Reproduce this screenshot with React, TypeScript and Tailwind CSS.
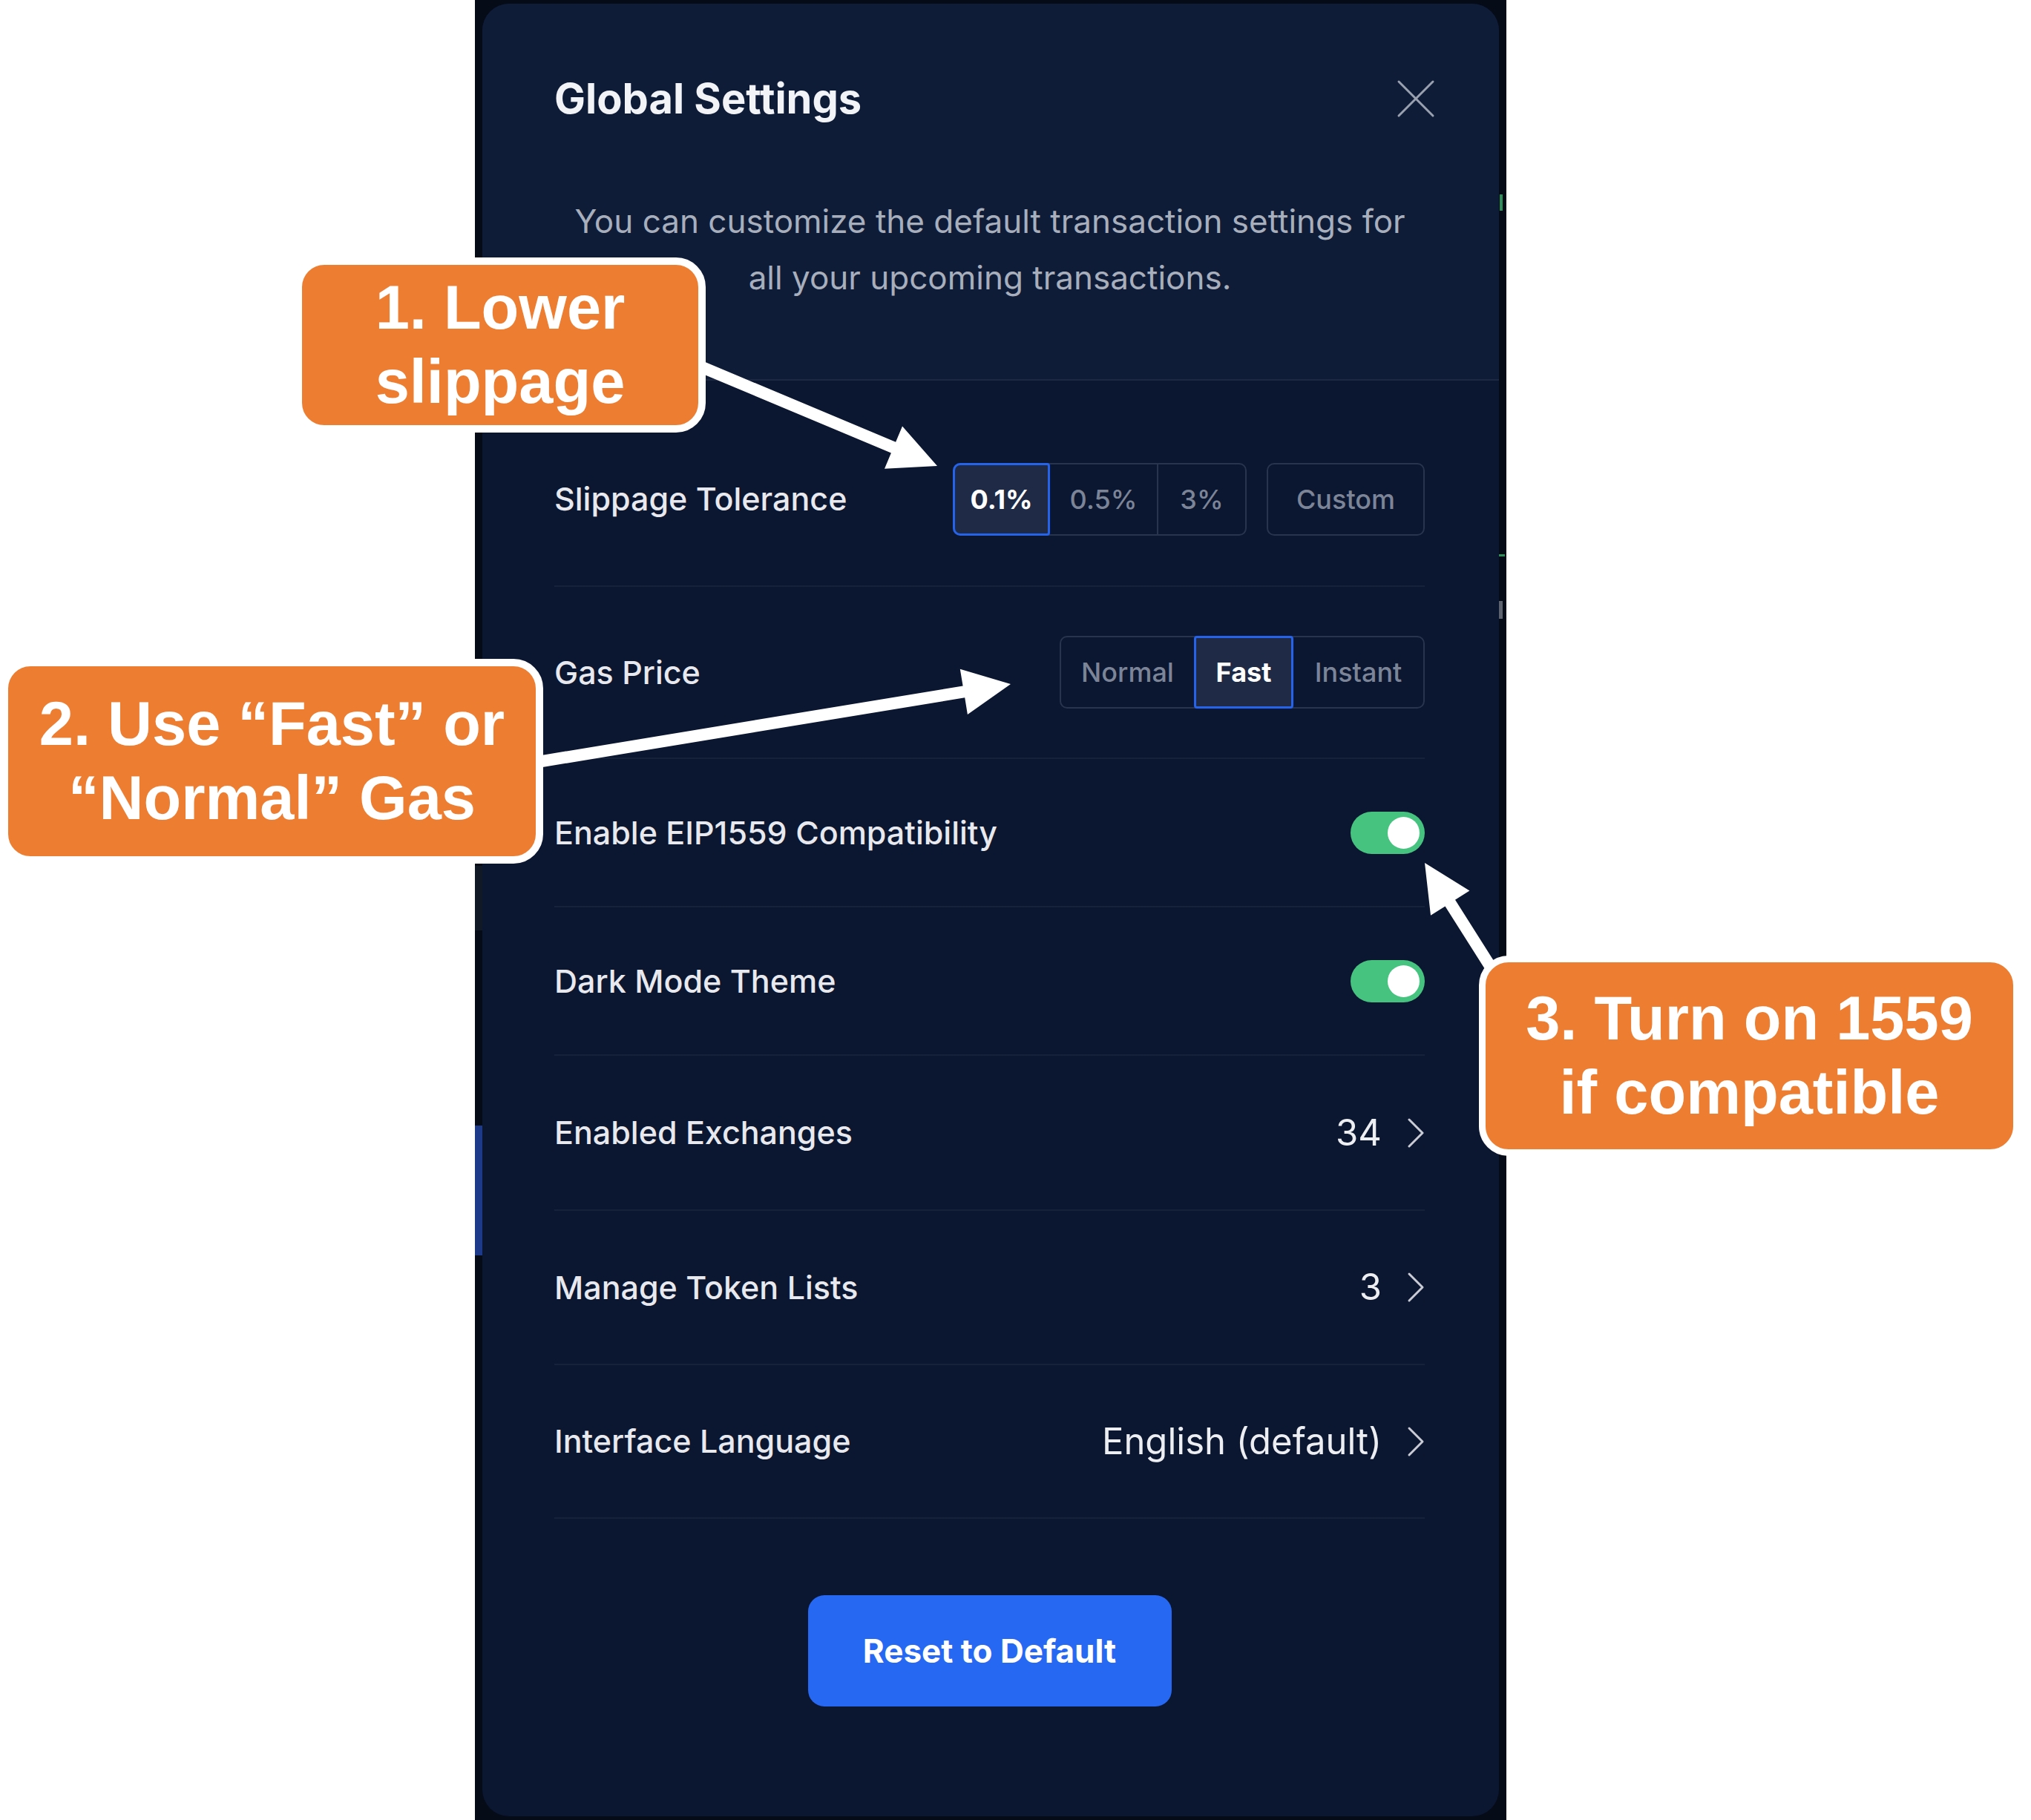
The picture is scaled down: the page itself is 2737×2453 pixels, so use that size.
import clsx from "clsx";

type Pt = [number, number];

// white annotation arrow as one polygon: shaft + triangular head
function arrowPoints(tail: Pt, tip: Pt, shaft = 16, headLen = 64, headHalf = 31) {
  const dx = tip[0] - tail[0];
  const dy = tip[1] - tail[1];
  const len = Math.hypot(dx, dy);
  const ux = dx / len;
  const uy = dy / len;
  const px = -uy;
  const py = ux;
  const bx = tip[0] - ux * headLen;
  const by = tip[1] - uy * headLen;
  const s = shaft / 2;
  const pts: Pt[] = [
    [tail[0] + px * s, tail[1] + py * s],
    [bx + px * s, by + py * s],
    [bx + px * headHalf, by + py * headHalf],
    tip,
    [bx - px * headHalf, by - py * headHalf],
    [bx - px * s, by - py * s],
    [tail[0] - px * s, tail[1] - py * s],
  ];
  return pts.map((p) => `${p[0].toFixed(1)},${p[1].toFixed(1)}`).join(" ");
}

type Seg = { label: string; w: string };

function Segmented({ options, selected }: { options: Seg[]; selected: number }) {
  return (
    <div className="flex h-[98px] rounded-[10px] border-2 border-[#28344e]">
      {options.map((o, i) => {
        const on = i === selected;
        return (
          <div
            key={o.label}
            className={clsx(
              "flex items-center justify-center text-[36px]",
              o.w,
              on
                ? "relative z-10 -my-[2px] h-[98px] border-[3px] border-[#2563eb] bg-[#1e2a46] font-bold text-white"
                : "font-medium text-[#7c8598]",
              on && i === 0 ? "-ml-[2px] rounded-l-[10px] rounded-r-[4px]" : on && "rounded-[4px]",
              !on && i > 0 && i - 1 !== selected && "border-l-2 border-[#28344e]"
            )}
          >
            {o.label}
          </div>
        );
      })}
    </div>
  );
}

function Toggle() {
  return (
    <div className="flex h-[57px] w-[100px] items-center justify-end rounded-full bg-[#46c37f] pr-[7px]">
      <div className="h-[43px] w-[43px] rounded-full bg-white" />
    </div>
  );
}

function Chevron() {
  return (
    <svg width="24" height="42" viewBox="0 0 24 42" fill="none">
      <polyline points="3,3 21,21 3,39" stroke="#c9ccd4" strokeWidth="3" strokeLinecap="round" strokeLinejoin="round" />
    </svg>
  );
}

function Row({ h, label, children }: { h: string; label: string; children: React.ReactNode }) {
  return (
    <div className={clsx("flex items-center justify-between border-b-2 border-[#16213a]", h)}>
      <span className="text-[43px] font-medium text-[#e7e9ee]">{label}</span>
      {children}
    </div>
  );
}

function LinkValue({ value }: { value: string }) {
  return (
    <div className="flex items-center gap-[34px]">
      <span className="text-[49px] text-[#eceef2]">{value}</span>
      <Chevron />
    </div>
  );
}

function Callout({ className, lines }: { className: string; lines: string[] }) {
  return (
    <div
      className={clsx(
        "absolute flex flex-col items-center justify-center rounded-[40px] border-white bg-[#ed7d31] font-['Liberation_Sans',Arial,sans-serif] text-[83px] font-bold leading-[100px] text-white",
        className
      )}
    >
      {lines.map((l) => (
        <div key={l} className="whitespace-nowrap">
          {l}
        </div>
      ))}
    </div>
  );
}

export default function App() {
  return (
    <div className="relative h-[2453px] w-[2737px] overflow-hidden bg-white font-['Inter',sans-serif]">
      <div className="ml-[640px] flex h-full w-[1390px] bg-[#050b17]">
        {/* bits of the page under the modal, left edge */}
        <div className="flex w-[10px] flex-col">
          <div className="h-[1167px]" />
          <div className="h-[87px] bg-[#111826]" />
          <div className="h-[263px]" />
          <div className="h-[175px] bg-[#1d3a8a]" />
        </div>

        <div className="mt-[5px] h-[2443px] w-[1370px] overflow-hidden rounded-[36px] bg-[#0b1630]">
          <div className="h-[508px] border-b-2 border-[#1d2943] bg-[#0f1c38] pl-[97px] pr-[86px] pt-[96px]">
            <div className="flex h-[64px] items-center justify-between">
              <h2 className="text-[56px] font-bold leading-[64px] text-[#f1f3f7]">Global Settings</h2>
              <svg width="52" height="52" viewBox="0 0 52 52" fill="none">
                <path d="M3 3L49 49M49 3L3 49" stroke="#9aa1ae" strokeWidth="3" strokeLinecap="round" />
              </svg>
            </div>
            <p className="mt-[95px] whitespace-nowrap pr-[13px] text-center text-[44px] leading-[76px] text-[#a7aebc]">
              You can customize the default transaction settings for
              <br />
              all your upcoming transactions.
            </p>
          </div>

          <div className="pl-[97px] pr-[100px] pt-[43px]">
            <Row h="h-[235px]" label="Slippage Tolerance">
              <div className="flex gap-[27px]">
                <Segmented
                  selected={0}
                  options={[
                    { label: "0.1%", w: "w-[131px]" },
                    { label: "0.5%", w: "w-[144px]" },
                    { label: "3%", w: "w-[119px]" },
                  ]}
                />
                <div className="flex h-[98px] w-[213px] items-center justify-center rounded-[10px] border-2 border-[#28344e] text-[36px] font-medium text-[#7c8598]">
                  Custom
                </div>
              </div>
            </Row>
            <Row h="h-[232px]" label="Gas Price">
              <Segmented
                selected={1}
                options={[
                  { label: "Normal", w: "w-[179px]" },
                  { label: "Fast", w: "w-[134px]" },
                  { label: "Instant", w: "w-[175px]" },
                ]}
              />
            </Row>
            <Row h="h-[200px]" label="Enable EIP1559 Compatibility">
              <Toggle />
            </Row>
            <Row h="h-[200px]" label="Dark Mode Theme">
              <Toggle />
            </Row>
            <Row h="h-[209px]" label="Enabled Exchanges">
              <LinkValue value="34" />
            </Row>
            <Row h="h-[208px]" label="Manage Token Lists">
              <LinkValue value="3" />
            </Row>
            <Row h="h-[207px]" label="Interface Language">
              <LinkValue value="English (default)" />
            </Row>
            <button className="mx-auto mt-[103px] flex h-[150px] w-[490px] items-center justify-center rounded-[22px] bg-[#2768f2] text-[44px] font-bold text-white">
              Reset to Default
            </button>
          </div>
        </div>

        {/* right edge of the page under the modal */}
        <div className="flex w-[10px] flex-col">
          <div className="h-[262px]" />
          <div className="ml-[1px] h-[22px] w-[4px] bg-[#2f8f5b]" />
          <div className="h-[463px]" />
          <div className="h-[3px] w-[8px] bg-[#2f8f5b]" />
          <div className="h-[60px]" />
          <div className="h-[24px] w-[5px] bg-[#5d6470]" />
        </div>
      </div>

      {/* annotations */}
      <svg className="absolute left-0 top-0" width="2737" height="2453">
        <polygon points={arrowPoints([920, 484], [1263, 628])} fill="#ffffff" />
        <polygon points={arrowPoints([700, 1031], [1362, 922])} fill="#ffffff" />
        <polygon points={arrowPoints([2020, 1321], [1920, 1163])} fill="#ffffff" />
      </svg>
      <Callout className="left-[397px] top-[347px] h-[236px] w-[554px] border-[10px]" lines={["1. Lower", "slippage"]} />
      <Callout
        className="left-[1px] top-[888px] h-[276px] w-[731px] border-[10px]"
        lines={["2. Use \u201CFast\u201D or", "\u201CNormal\u201D Gas"]}
      />
      <Callout
        className="left-[1993px] top-[1288px] h-[270px] w-[729px] border-[9px]"
        lines={["3. Turn on 1559", "if compatible"]}
      />
    </div>
  );
}
